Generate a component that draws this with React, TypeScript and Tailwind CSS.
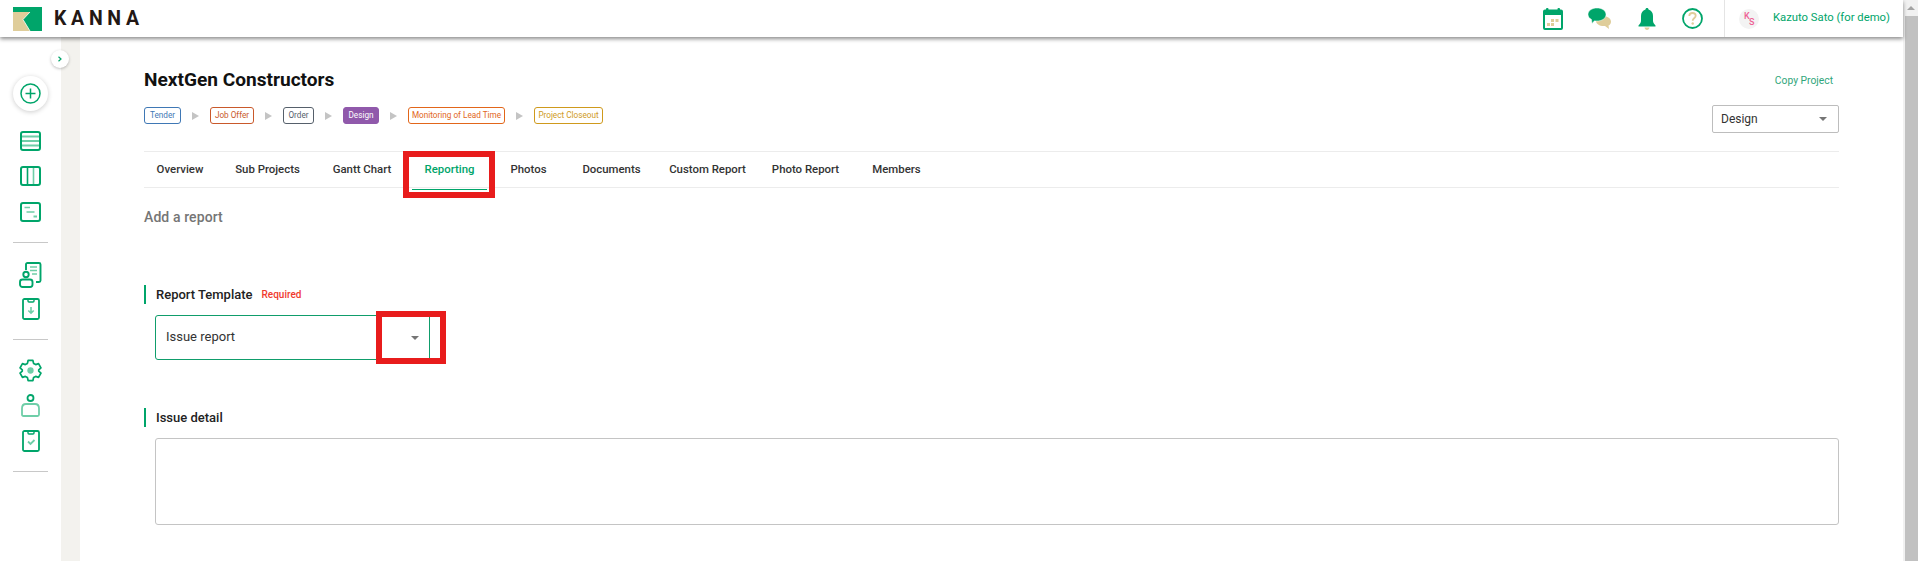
const green = '#00a56a';

function LogoMark() {
  return (
    <svg width="29" height="24" viewBox="0 0 29 24">
      <rect width="29" height="24" fill={green} />
      <path d="M0 5H17L10 12.500L17 24H0Z" fill="#dfcd9a" />
      <path d="M17 5L10 12.500L17 24" fill="none" stroke="#fff" strokeWidth="0.800" />
    </svg>
  );
}

function CalendarIcon() {
  return (
    <svg width="20" height="22" viewBox="0 0 20 22">
      <rect x="3" y="0" width="2.5" height="4" rx="1" fill={green} />
      <rect x="14.5" y="0" width="2.5" height="4" rx="1" fill={green} />
      <rect x="1" y="2.5" width="18" height="18.5" rx="1" fill="#fff" stroke={green} strokeWidth="2" />
      <rect x="1" y="2.5" width="18" height="4.5" fill={green} />
      <rect x="8" y="11" width="3" height="3" fill="#dfcd9a" />
      <rect x="12.5" y="11" width="3" height="3" fill="#dfcd9a" />
      <rect x="4" y="15" width="3" height="3" fill="#dfcd9a" />
      <rect x="8" y="15" width="3" height="3" fill="#dfcd9a" />
    </svg>
  );
}

function ChatIcon() {
  return (
    <svg width="24" height="22" viewBox="0 0 24 22">
      <path d="M9 8C16 7 23 9 23 13.500C23 15.500 22 17 20.500 17.500L21 21L17 18C12 18.500 8 16 8 13Z" fill="#dfcd9a" />
      <path d="M9 0C14 0 18 2.600 18 6.500C18 10.500 14 13 9 13C8 13 7 13 6.500 12.800L4 15.500L3.500 11.500C1.500 10.500 0 8.700 0 6.500C0 2.600 4 0 9 0Z" fill={green} stroke="#fff" strokeWidth="0.5" />
    </svg>
  );
}

function BellIcon() {
  return (
    <svg width="18" height="22" viewBox="0 0 18 22">
      <path d="M9 0C10 0 10.500 .7 10.500 1.500C13.500 2.300 15 5 15 8V13C15 15 16.500 16 17.500 17.500V18.500H.5V17.500C1.500 16 3 15 3 13V8C3 5 4.500 2.300 7.500 1.500C7.500 .7 8 0 9 0Z" fill={green} />
      <path d="M6.500 19.500H11.500C11.300 21 10.300 22 9 22C7.700 22 6.700 21 6.500 19.500Z" fill="#dfcd9a" />
    </svg>
  );
}

function HelpIcon() {
  return (
    <svg width="21" height="21" viewBox="0 0 21 21">
      <circle cx="10.500" cy="10.500" r="9.500" fill="none" stroke={green} strokeWidth="1.800" />
      <path d="M7.300 8C7.300 6.200 8.700 5 10.500 5C12.300 5 13.700 6.200 13.700 7.800C13.700 10 10.700 10 10.700 12.800" fill="none" stroke="#dfcd9a" strokeWidth="1.800" />
      <circle cx="10.700" cy="15.500" r="1.200" fill="#dfcd9a" />
    </svg>
  );
}

function ListIcon() {
  return (
    <svg width="21" height="20" viewBox="0 0 21 20" fill="none">
      <path d="M1 5.500H20M1 10H20M1 14.500H20" stroke="#6fcea8" strokeWidth="1.800" />
      <rect x="1" y="1" width="19" height="18" rx="2" stroke={green} strokeWidth="2" />
    </svg>
  );
}

function ColumnsIcon() {
  return (
    <svg width="21" height="20" viewBox="0 0 21 20" fill="none">
      <path d="M7.500 1V19" stroke={green} strokeWidth="1.600" />
      <path d="M13.500 1V19" stroke="#6fcea8" strokeWidth="1.600" />
      <rect x="1" y="1" width="19" height="18" rx="2" stroke={green} strokeWidth="2" />
    </svg>
  );
}

function GanttIcon() {
  return (
    <svg width="21" height="20" viewBox="0 0 21 20" fill="none">
      <rect x="1" y="1" width="19" height="18" rx="2" stroke={green} strokeWidth="2" />
      <path d="M4.500 5.500H10M6.500 10H14.500" stroke="#6fcea8" strokeWidth="1.600" />
      <path d="M13.500 14.500H17" stroke="#6fcea8" strokeWidth="2" />
    </svg>
  );
}

function PersonDocIcon() {
  return (
    <svg width="23" height="26" viewBox="0 0 23 26" fill="none">
      <path d="M7 8V2.500C7 1.600 7.600 1 8.500 1H20C21 1 21.500 1.600 21.500 2.500V18.500C21.500 19.400 21 20 20 20H17" stroke={green} strokeWidth="1.900" />
      <path d="M11 5H18M11 8.500H18M13 12H18" stroke="#6fcea8" strokeWidth="1.500" />
      <circle cx="7" cy="12.500" r="2.700" stroke={green} strokeWidth="1.900" />
      <rect x="1" y="17.500" width="12.500" height="7.500" rx="2.500" stroke={green} strokeWidth="1.900" />
    </svg>
  );
}

function ClipIcon({ check }: { check?: boolean }) {
  return (
    <svg width="18" height="22" viewBox="0 0 18 22" fill="none">
      <rect x="1" y="1" width="16" height="20" rx="1.500" stroke={green} strokeWidth="1.800" />
      <path d="M6 1V3C6 3.600 6.400 4 7 4H11C11.600 4 12 3.600 12 3V1" stroke={green} strokeWidth="1.400" />
      {check ? (
        <path d="M6 11.500L8.500 14L12.500 10" stroke="#6fcea8" strokeWidth="1.800" />
      ) : (
        <path d="M9 9V15M6.300 12.500L9 15.200L11.700 12.500" stroke="#6fcea8" strokeWidth="1.600" />
      )}
    </svg>
  );
}

function GearIcon() {
  return (
    <svg width="23" height="23" viewBox="0 0 24 24" fill="none">
      <path
        d="M9.500 1.500H14.500L15.200 4.600L17.400 5.800L20.400 4.800L22.900 9.200L20.600 11.300V12.700L22.900 14.800L20.400 19.200L17.400 18.200L15.200 19.400L14.500 22.500H9.500L8.800 19.400L6.600 18.200L3.600 19.200L1.100 14.800L3.400 12.700V11.300L1.100 9.200L3.600 4.800L6.600 5.800L8.800 4.600Z"
        stroke={green}
        strokeWidth="1.800"
        strokeLinejoin="round"
      />
      <circle cx="12" cy="12" r="3.300" fill="#6fcea8" />
    </svg>
  );
}

function UserIcon() {
  return (
    <svg width="19" height="23" viewBox="0 0 19 23" fill="none">
      <circle cx="9.500" cy="4" r="3" stroke={green} strokeWidth="1.800" />
      <path d="M1 14.500C1 11.500 3 10 5 10H14C16 10 18 11.500 18 14.500V20.500C18 21.300 17.500 22 16.500 22H2.500C1.500 22 1 21.300 1 20.500Z" stroke="#6fcea8" strokeWidth="1.800" />
    </svg>
  );
}

function Caret() {
  return <div className="h-0 w-0 border-x-[4px] border-t-[4px] border-x-transparent border-t-[#757575]" />;
}

const stages = [
  { label: 'Tender', cls: 'w-[37px] border-[#3f78b5] text-[#3f78b5]' },
  { label: 'Job Offer', cls: 'w-[44px] border-[#c9592b] text-[#c9592b]' },
  { label: 'Order', cls: 'w-[31px] border-[#56606b] text-[#56606b]' },
  { label: 'Design', cls: 'w-[36px] border-[#9059ab] bg-[#9059ab] text-white' },
  { label: 'Monitoring of Lead Time', cls: 'w-[97px] border-[#e2661a] text-[#e2661a]' },
  { label: 'Project Closeout', cls: 'w-[69px] border-[#cf9a1d] text-[#cf9a1d]' },
];

const tabs = [
  { label: 'Overview', cls: 'w-[72px]' },
  { label: 'Sub Projects', cls: 'w-[103px]' },
  { label: 'Gantt Chart', cls: 'w-[86px]' },
  { label: 'Reporting', cls: 'w-[75px] mx-[7px]', active: true },
  { label: 'Photos', cls: 'w-[69px]' },
  { label: 'Documents', cls: 'w-[97px]' },
  { label: 'Custom Report', cls: 'w-[95px]' },
  { label: 'Photo Report', cls: 'w-[101px]' },
  { label: 'Members', cls: 'w-[81px]' },
];

function SectionLabel({ children }: { children: React.ReactNode }) {
  return (
    <div className="flex h-[19px] items-center border-l-2 border-[#00a56a] pl-[10px]">{children}</div>
  );
}

export default function App() {
  return (
    <div className="flex h-[561px] w-[1918px] overflow-hidden bg-white font-['Roboto',sans-serif] text-[#212121]">
      <div className="flex w-[1903px] flex-col">
        {/* top bar */}
        <header className="z-10 flex h-[37px] shrink-0 items-center bg-white pl-[13px] shadow-[0_2px_4px_rgba(0,0,0,0.45)]">
          <LogoMark />
          <span className="ml-[12px] text-[19.5px] font-bold leading-none tracking-[4.7px] text-[#231815]">KANNA</span>
          <div className="ml-auto flex h-full items-center">
            <CalendarIcon />
            <div className="ml-[25px]"><ChatIcon /></div>
            <div className="ml-[26px]"><BellIcon /></div>
            <div className="ml-[26px]"><HelpIcon /></div>
            <div className="ml-[21px] h-full w-px bg-[#e4e4e4]" />
            <div className="relative ml-[14px] h-[20px] w-[20px] rounded-full bg-[#f3f3f3]">
              <span className="absolute left-[5px] top-[3px] text-[9px] font-medium leading-none text-[#ee5f94]">K</span>
              <span className="absolute left-[10px] top-[9px] text-[9px] font-medium leading-none text-[#ee5f94]">S</span>
            </div>
            <span className="ml-[14px] mr-[13px] text-[11.3px] text-[#00a56a]">Kazuto Sato (for demo)</span>
          </div>
        </header>

        <div className="flex min-h-0 flex-1">
          {/* left nav */}
          <aside className="relative flex w-[61px] shrink-0 flex-col items-center bg-white pt-[39px]">
            <button className="absolute left-[51px] top-[13px] flex h-[18px] w-[18px] items-center justify-center rounded-full bg-white shadow-[0_1px_3px_rgba(0,0,0,0.25)]">
              <svg width="6" height="6" viewBox="0 0 6 6" fill="none"><path d="M1.500 .8L4 3L1.500 5.200" stroke={green} strokeWidth="1.200" /></svg>
            </button>
            <div className="flex h-[35px] w-[35px] items-center justify-center rounded-full bg-white shadow-[0_1px_5px_rgba(0,0,0,0.2)]">
              <svg width="21" height="21" viewBox="0 0 21 21" fill="none">
                <circle cx="10.500" cy="10.500" r="9.500" stroke={green} strokeWidth="1.500" />
                <path d="M10.500 5.500V15.500M5.500 10.500H15.500" stroke={green} strokeWidth="1.500" />
              </svg>
            </div>
            <div className="mt-[20px]"><ListIcon /></div>
            <div className="mt-[15px]"><ColumnsIcon /></div>
            <div className="mt-[16px]"><GanttIcon /></div>
            <div className="mt-[20px] h-px w-[35px] bg-[#c8c8c8]" />
            <div className="mt-[19px]"><PersonDocIcon /></div>
            <div className="mt-[10px]"><ClipIcon /></div>
            <div className="mt-[19px] h-px w-[35px] bg-[#c8c8c8]" />
            <div className="mt-[19px]"><GearIcon /></div>
            <div className="mt-[12px]"><UserIcon /></div>
            <div className="mt-[13px]"><ClipIcon check /></div>
            <div className="mt-[19px] h-px w-[35px] bg-[#c8c8c8]" />
          </aside>
          <div className="w-[19px] shrink-0 bg-[#f3f2ee]" />

          {/* main */}
          <main className="relative min-w-0 flex-1 pl-[64px] pr-[64px]">
            <div className="flex h-[58px] items-start justify-between pt-[30px]">
              <h1 className="text-[19.1px] font-bold leading-[26px] text-[#111]">NextGen Constructors</h1>
              <span className="mr-[6px] mt-[7px] text-[10.3px] leading-[14px] text-[#2fa67b]">Copy Project</span>
            </div>

            <div className="flex h-[56px] items-start justify-between pt-[12px]">
              <div className="flex items-center">
                {stages.map((s, i) => (
                  <div key={s.label} className="flex items-center">
                    <span className={`flex h-[17px] items-center justify-center whitespace-nowrap rounded-[3px] border text-[8.2px] leading-none ${s.cls}`}>{s.label}</span>
                    {i < stages.length - 1 && (
                      <div className="mx-[11px] h-0 w-0 border-y-[4px] border-l-[7px] border-y-transparent border-l-[#c4c4c4]" />
                    )}
                  </div>
                ))}
              </div>
              <div className="-mt-[2px] flex h-[28px] w-[127px] items-center justify-between rounded-[2px] border border-[#bdbdbd] pl-[8px] pr-[11px] text-[12px] text-[#333]">
                Design
                <Caret />
              </div>
            </div>

            <nav className="flex h-[37px] items-center border-y border-[#ececec]">
              {tabs.map(t => (
                <div
                  key={t.label}
                  className={`relative shrink-0 text-center text-[11.4px] font-medium ${t.cls} ${t.active ? 'text-[#00a56a]' : 'text-[#333]'}`}
                >
                  {t.label}
                  {t.active && <div className="absolute -bottom-[12px] left-0 h-[1.500px] w-full bg-[#00a56a]" />}
                </div>
              ))}
            </nav>

            <div className="mt-[19px] text-[14px] font-medium leading-[20px] tracking-[0.1px] text-[#757575]">Add a report</div>

            <div className="mt-[58px]">
              <SectionLabel>
                <span className="text-[13px] font-medium text-[#222]">Report Template</span>
                <span className="ml-[9px] text-[10px] font-medium text-[#f03a2e]">Required</span>
              </SectionLabel>
            </div>
            <div className="ml-[11px] mt-[11px] flex h-[45px] w-[275px] items-center rounded-l-[3px] border border-[#0f9d6b] pb-[2px] pl-[10px] text-[13px] text-[#333]">
              Issue report
              <div className="ml-auto mr-[10px] mt-[3px]"><Caret /></div>
            </div>

            <div className="mt-[48px]">
              <SectionLabel>
                <span className="text-[13px] font-medium text-[#222]">Issue detail</span>
              </SectionLabel>
            </div>
            <div className="ml-[11px] mt-[11px] h-[87px] rounded-[3px] border border-[#c4c4c4]" />

            {/* red annotation boxes */}
            <div className="absolute left-[323px] top-[114px] h-[47px] w-[92px] border-[6px] border-[#e81c1c]" />
            <div className="absolute left-[296px] top-[274px] h-[53px] w-[70px] border-[6px] border-[#e81c1c]" />
          </main>
        </div>
      </div>

      {/* scrollbar */}
      <div className="flex w-[15px] shrink-0 flex-col items-center bg-[#f1f1f1]">
        <div className="flex h-[16px] items-center">
          <div className="h-0 w-0 border-x-[4px] border-b-[4px] border-x-transparent border-b-[#a3a3a3]" />
        </div>
        <div className="ml-[1px] w-[13px] flex-1 bg-[#c1c1c1]" />
      </div>
    </div>
  );
}
